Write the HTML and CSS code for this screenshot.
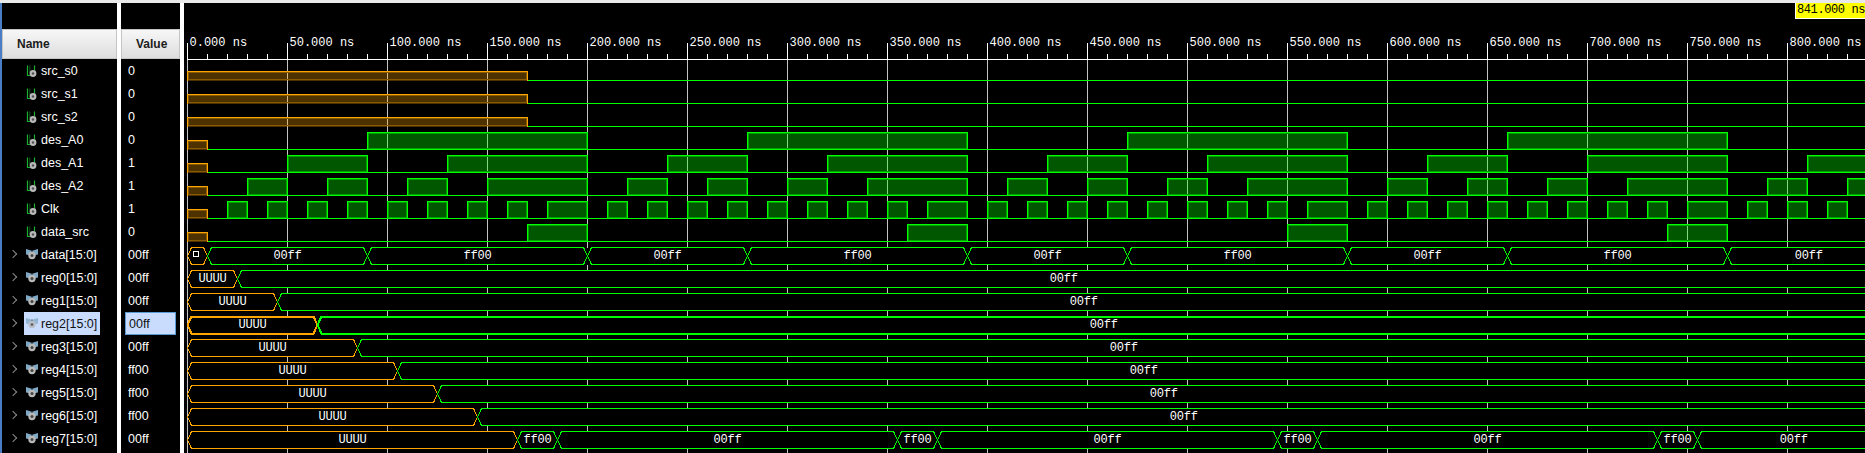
FILE: index.html
```html
<!DOCTYPE html>
<html lang="en">
<head>
    <meta charset="UTF-8">
    <meta name="viewport" content="width=device-width, initial-scale=1.0">
    <title>Waveform</title>
    <link rel="stylesheet" href="styles.css">
</head>
<body>
    <svg class="defs" width="0" height="0">
        <symbol id="icon-bit" viewBox="0 0 14 14">
            <path d="M1.500 1.500v10h3.500M8.500 1.500v5" fill="none" stroke="#18b030" stroke-width="1.200"/>
            <path d="M3.800 1.500v7" fill="none" stroke="#0a5c1a" stroke-width="1"/>
            <circle cx="7" cy="9.500" r="3.400" fill="#b8b8b8"/>
            <circle cx="7" cy="9.500" r="1.200" fill="#505050"/>
        </symbol>
        <symbol id="icon-bus" viewBox="0 0 14 14">
            <path d="M0 1l5 1.500v5l-5-1zM12 1l-5 1.500v5l5-1z" fill="#7fa8c4"/>
            <path d="M5 2.500h2v3h-2z" fill="#4c6678"/>
            <circle cx="6" cy="7.500" r="3.700" fill="#b8b8b8"/>
            <circle cx="6" cy="7.500" r="1.500" fill="#454545"/>
        </symbol>
    </svg>

    <div class="strip"></div>
    <div class="panes">
        <div class="name-pane">
            <div class="head name-head">Name</div>
            <div class="row"><svg class="icon"><use href="#icon-bit"/></svg><span>src_s0</span></div>
            <div class="row"><svg class="icon"><use href="#icon-bit"/></svg><span>src_s1</span></div>
            <div class="row"><svg class="icon"><use href="#icon-bit"/></svg><span>src_s2</span></div>
            <div class="row"><svg class="icon"><use href="#icon-bit"/></svg><span>des_A0</span></div>
            <div class="row"><svg class="icon"><use href="#icon-bit"/></svg><span>des_A1</span></div>
            <div class="row"><svg class="icon"><use href="#icon-bit"/></svg><span>des_A2</span></div>
            <div class="row"><svg class="icon"><use href="#icon-bit"/></svg><span>Clk</span></div>
            <div class="row"><svg class="icon"><use href="#icon-bit"/></svg><span>data_src</span></div>
            <div class="row bus"><i class="chevron"></i><svg class="icon"><use href="#icon-bus"/></svg><span>data[15:0]</span></div>
            <div class="row bus"><i class="chevron"></i><svg class="icon"><use href="#icon-bus"/></svg><span>reg0[15:0]</span></div>
            <div class="row bus"><i class="chevron"></i><svg class="icon"><use href="#icon-bus"/></svg><span>reg1[15:0]</span></div>
            <div class="row bus selected"><i class="chevron"></i><div class="pick"><svg class="icon"><use href="#icon-bus"/></svg><span>reg2[15:0]</span></div></div>
            <div class="row bus"><i class="chevron"></i><svg class="icon"><use href="#icon-bus"/></svg><span>reg3[15:0]</span></div>
            <div class="row bus"><i class="chevron"></i><svg class="icon"><use href="#icon-bus"/></svg><span>reg4[15:0]</span></div>
            <div class="row bus"><i class="chevron"></i><svg class="icon"><use href="#icon-bus"/></svg><span>reg5[15:0]</span></div>
            <div class="row bus"><i class="chevron"></i><svg class="icon"><use href="#icon-bus"/></svg><span>reg6[15:0]</span></div>
            <div class="row bus"><i class="chevron"></i><svg class="icon"><use href="#icon-bus"/></svg><span>reg7[15:0]</span></div>
        </div>
        <div class="value-pane">
            <div class="head value-head">Value</div>
            <div class="cell">0</div>
            <div class="cell">0</div>
            <div class="cell">0</div>
            <div class="cell">0</div>
            <div class="cell">1</div>
            <div class="cell">1</div>
            <div class="cell">1</div>
            <div class="cell">0</div>
            <div class="cell">00ff</div>
            <div class="cell">00ff</div>
            <div class="cell">00ff</div>
            <div class="cell selected">00ff</div>
            <div class="cell">00ff</div>
            <div class="cell">ff00</div>
            <div class="cell">ff00</div>
            <div class="cell">ff00</div>
            <div class="cell">00ff</div>
        </div>
        <div class="wave-pane">
            <svg id="wave" class="wave" viewBox="184 3 1681 450" width="1681" height="450"></svg>
            <div class="cursor-tag">841.000 ns</div>
        </div>
    </div>
    <script src="wave.js"></script>
</body>
</html>
```

FILE: styles.css
```css
body {
    margin: 0;
    height: 100vh;
    overflow: hidden;
    background-color: #000000;
    font-family: "Liberation Sans", Arial, sans-serif;
    font-size: 12.5px;
    color: #ffffff;
}

.defs {
    display: block;
}

.strip {
    height: 3px;
    background-color: #e9e9e9;
}

.panes {
    display: flex;
    height: 450px;
    border-left: 2px solid #4a7ec4;
}

.name-pane {
    width: 115px;
    padding-top: 26px;
    border-right: 4px solid #ffffff;
}

.value-pane {
    width: 59px;
    padding-top: 26px;
    border-right: 4px solid #ffffff;
}

.wave-pane {
    position: relative;
    flex: 1;
    overflow: hidden;
}

.wave {
    display: block;
}

.head {
    box-sizing: border-box;
    height: 30px;
    display: flex;
    align-items: center;
    font-size: 12px;
    font-weight: bold;
    color: #1c1c1c;
    background: linear-gradient(#f7f7f7, #dddddd);
    border: 1px solid #c4c4c4;
}

.name-head {
    padding-left: 14px;
}

.value-head {
    padding-left: 14px;
}

.row {
    position: relative;
    height: 23px;
    display: flex;
    align-items: center;
    padding-left: 24px;
}

.icon {
    width: 14px;
    height: 14px;
    margin-right: 1px;
    flex-shrink: 0;
}

.chevron {
    position: absolute;
    left: 8px;
    top: 8px;
    width: 5px;
    height: 5px;
    border-top: 1.500px solid #8a8a8a;
    border-right: 1.500px solid #8a8a8a;
    transform: rotate(45deg);
}

.pick {
    height: 23px;
    display: flex;
    align-items: center;
    width: 76px;
    margin-left: -2px;
    padding-left: 2px;
    box-sizing: border-box;
    color: #111111;
    background-color: #c9dcfd;
}

.pick .icon {
    opacity: 0.75;
}

.cell {
    box-sizing: border-box;
    height: 23px;
    display: flex;
    align-items: center;
    padding-left: 7px;
}

.cell.selected {
    width: 51px;
    margin-left: 4px;
    padding-left: 3px;
    color: #111111;
    background-color: #c9dcfd;
    border: 1px solid #5b9bd5;
}

.cursor-tag {
    position: absolute;
    top: 0;
    left: 1611px;
    width: 70px;
    height: 16px;
    box-sizing: border-box;
    padding-left: 1px;
    font-family: "Liberation Mono", "Courier New", monospace;
    font-size: 12px;
    letter-spacing: -0.4px;
    line-height: 15px;
    white-space: nowrap;
    overflow: hidden;
    color: #000000;
    background-color: #ffff00;
    border-left: 1px solid #ffffff;
    border-bottom: 1px solid #ffffff;
}

.ruler-text,
.bus-text {
    font-family: "Liberation Mono", "Courier New", monospace;
    font-size: 12px;
    fill: #ffffff;
}

.bus-text {
    letter-spacing: -0.2px;
}
```

FILE: wave.js
```js
const NS = 'http://www.w3.org/2000/svg';
const wave = document.getElementById('wave');

const GREEN = '#00ff00';
const ORANGE = '#ffa500';
const END_X = 1890;
const PERIOD = 190;

function timeX(t) {
    return 187.5 + 2 * t;
}

function rowLow(i) {
    return 80.5 + 23 * i;
}

function add(tag, attrs, text) {
    let el = document.createElementNS(NS, tag);
    for (let key in attrs) {
        el.setAttribute(key, attrs[key]);
    }
    if (text) {
        el.textContent = text;
    }
    wave.appendChild(el);
    return el;
}

function line(x1, y1, x2, y2, color, width) {
    add('line', {
        x1: x1, y1: y1, x2: x2, y2: y2,
        stroke: color,
        'stroke-width': width || 1,
        'shape-rendering': 'crispEdges'
    });
}

function drawRuler() {
    for (let t = 0; t < 850; t += 10) {
        let x = timeX(t);
        if (t % 50 === 0) {
            line(x, 59, x, 453, '#c4c4c4');
            line(x, 43, x, 59, '#ffffff');
            add('text', { x: x + 2, y: 46, class: 'ruler-text' }, t + '.000 ns');
        } else {
            line(x, 54, x, 59, '#ffffff');
        }
    }
    line(187, 59.5, 1865, 59.5, '#ffffff');
}

// block of a one-bit signal, bright on the outside and darker on the inside
function block(t1, t2, top, low, bright, inner, fill) {
    let x1 = timeX(t1);
    let x2 = timeX(t2);
    add('rect', { x: x1, y: top, width: x2 - x1, height: low - top, fill: fill, 'shape-rendering': 'crispEdges' });
    add('path', {
        d: `M${x1 + 1} ${low - 1}V${top + 1}H${x2 - 1}V${low - 1}H${x1 + 1}`,
        fill: 'none',
        stroke: inner,
        'shape-rendering': 'crispEdges'
    });
    add('path', {
        d: `M${x1} ${low}V${top}H${x2}V${low}`,
        fill: 'none',
        stroke: bright,
        'shape-rendering': 'crispEdges'
    });
}

// highs are [start, end] pairs in the first period, repeated every 190 ns
function drawBit(i, highs, xUntil) {
    let low = rowLow(i);
    if (xUntil > 0) {
        block(0, xUntil, low - 9, low, ORANGE, '#8a5a00', 'rgba(255, 165, 0, 0.3)');
    }
    line(timeX(xUntil), low, 1865, low, GREEN);
    for (let k = 0; k < 5; k++) {
        highs.forEach(function (h) {
            block(h[0] + k * PERIOD, h[1] + k * PERIOD, low - 17, low, GREEN, '#00a000', 'rgba(0, 255, 0, 0.34)');
        });
    }
}

// segs: [start, end, text, color]; the last one runs off the right edge
function drawBus(i, segs, width) {
    let low = rowLow(i);
    let top = low - 17;
    let mid = low - 8.5;
    add('rect', { x: timeX(0), y: top, width: 1700, height: 17, fill: '#000000', 'shape-rendering': 'crispEdges' });
    segs.forEach(function (seg, n) {
        let x1 = timeX(seg[0]);
        let x2 = n === segs.length - 1 ? END_X : timeX(seg[1]);
        add('path', {
            d: `M${x1} ${mid}L${x1 + 4} ${top}H${x2 - 4}L${x2} ${mid}L${x2 - 4} ${low}H${x1 + 4}Z`,
            fill: 'none',
            stroke: seg[3],
            'stroke-width': width || 1,
            'shape-rendering': 'crispEdges'
        });
        if (seg[2] === 'box') {
            add('rect', { x: x1 + 5.5, y: top + 3.5, width: 5, height: 5, fill: 'none', stroke: '#ffffff', 'shape-rendering': 'crispEdges' });
        } else {
            add('text', {
                x: (x1 + x2) / 2,
                y: top + 11,
                class: 'bus-text',
                'text-anchor': 'middle'
            }, seg[2]);
        }
    });
}

function drawReg(i, uEnd) {
    drawBus(i, [[0, uEnd, 'UUUU', ORANGE], [uEnd, 900, '00ff', GREEN]], i === 11 ? 2 : 1);
}

drawRuler();

drawBit(0, [], 170);
drawBit(1, [], 170);
drawBit(2, [], 170);
drawBit(3, [[90, 200]], 10);
drawBit(4, [[50, 90], [130, 200]], 10);
drawBit(5, [[30, 50], [70, 90], [110, 130], [150, 200]], 10);
drawBit(6, [[20, 30], [40, 50], [60, 70], [80, 90], [100, 110], [120, 130], [140, 150], [160, 170], [180, 200]], 10);
drawBit(7, [[170, 200]], 10);

drawBus(8, [
    [0, 10, 'box', ORANGE],
    [10, 90, '00ff', GREEN],
    [90, 200, 'ff00', GREEN],
    [200, 280, '00ff', GREEN],
    [280, 390, 'ff00', GREEN],
    [390, 470, '00ff', GREEN],
    [470, 580, 'ff00', GREEN],
    [580, 660, '00ff', GREEN],
    [660, 770, 'ff00', GREEN],
    [770, 900, '00ff', GREEN]
]);

drawReg(9, 25);
drawReg(10, 45);
drawReg(11, 65);
drawReg(12, 85);
drawReg(13, 105);
drawReg(14, 125);
drawReg(15, 145);

drawBus(16, [
    [0, 165, 'UUUU', ORANGE],
    [165, 185, 'ff00', GREEN],
    [185, 355, '00ff', GREEN],
    [355, 375, 'ff00', GREEN],
    [375, 545, '00ff', GREEN],
    [545, 565, 'ff00', GREEN],
    [565, 735, '00ff', GREEN],
    [735, 755, 'ff00', GREEN],
    [755, 900, '00ff', GREEN]
]);
```
